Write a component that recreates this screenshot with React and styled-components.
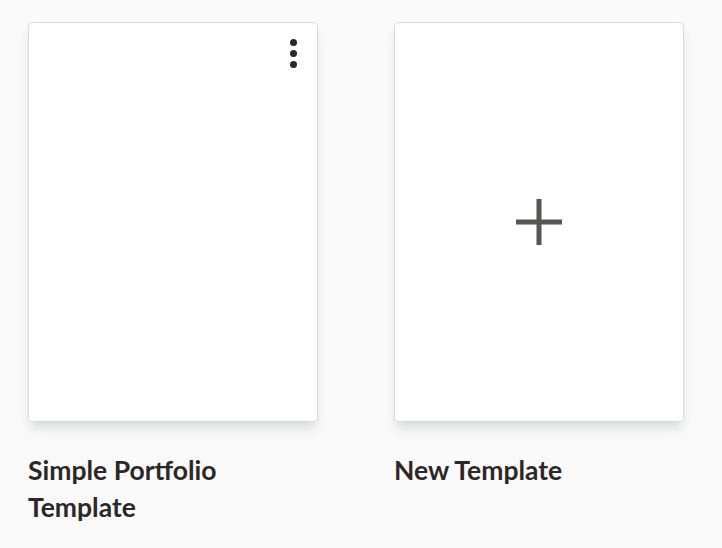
import React from 'react';
import styled, { createGlobalStyle } from 'styled-components';

const Global = createGlobalStyle`
  html, body {
    margin: 0;
    padding: 0;
    background: #fafafa;
    font-family: Lato, "Open Sans", sans-serif;
  }
`;

const Grid = styled.div`
  display: grid;
  grid-template-columns: 290px 290px;
  column-gap: 76px;
  padding: 22px 0 0 28px;
`;

const Item = styled.div`
  display: flex;
  flex-direction: column;
`;

const Card = styled.div`
  position: relative;
  height: 400px;
  box-sizing: border-box;
  background: #fff;
  border: 1px solid #dcdcdc;
  border-radius: 4px;
  box-shadow: 0 8px 12px -2px rgba(60, 70, 90, 0.17);
  display: flex;
  align-items: center;
  justify-content: center;
  cursor: pointer;
`;

const MenuButton = styled.button`
  position: absolute;
  top: 16px;
  right: 17px;
  width: 14px;
  height: 29px;
  padding: 0;
  border: none;
  background: transparent;
  display: flex;
  flex-direction: column;
  align-items: center;
  justify-content: space-between;
  cursor: pointer;
`;

const Dot = styled.span`
  width: 7px;
  height: 7px;
  border-radius: 50%;
  background: #2a2828;
`;

const Label = styled.h3`
  margin: 30px 0 0;
  font-size: 26.5px;
  line-height: 37px;
  font-weight: 700;
  color: #2c2828;
  width: 240px;
`;

const Plus = () => (
  <svg width="48" height="48" viewBox="0 0 48 48">
    <path d="M24 1v46M1 24h46" stroke="#555553" strokeWidth="5" fill="none" />
  </svg>
);

const App = () => (
  <>
    <Global />
    <Grid>
      <Item>
        <Card>
          <MenuButton aria-label="menu">
            <Dot />
            <Dot />
            <Dot />
          </MenuButton>
        </Card>
        <Label>Simple Portfolio Template</Label>
      </Item>
      <Item>
        <Card>
          <Plus />
        </Card>
        <Label>New Template</Label>
      </Item>
    </Grid>
  </>
);

export default App;
